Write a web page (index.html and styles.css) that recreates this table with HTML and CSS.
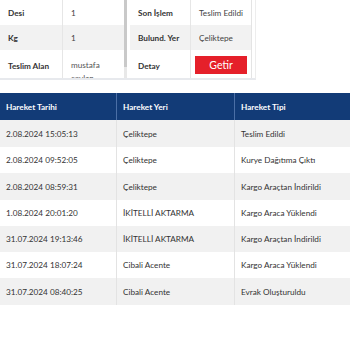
FILE: index.html
```html
<!DOCTYPE html>
<html lang="tr">
<head>
<meta charset="utf-8">
<link rel="stylesheet" href="styles.css">
</head>
<body>
<div class="top">
  <div class="card">
    <div class="info left">
      <div class="row"><div class="lbl">Desi</div><div class="val">1</div></div>
      <div class="row alt"><div class="lbl">Kg</div><div class="val">1</div></div>
      <div class="row tall"><div class="lbl">Teslim Alan</div><div class="val">mustafa ceylan</div></div>
    </div>
    <div class="scroll"><div class="thumb"></div></div>
    <div class="info right">
      <div class="row"><div class="lbl">Son İşlem</div><div class="val">Teslim Edildi</div></div>
      <div class="row alt"><div class="lbl">Bulund. Yer</div><div class="val">Çeliktepe</div></div>
      <div class="row tall"><div class="lbl">Detay</div><div class="val"><span class="btn">Getir</span></div></div>
    </div>
  </div>
</div>
<div class="moves">
  <div class="mrow head"><div>Hareket Tarihi</div><div>Hareket Yeri</div><div>Hareket Tipi</div></div>
  <div class="mrow alt"><div>2.08.2024 15:05:13</div><div>Çeliktepe</div><div>Teslim Edildi</div></div>
  <div class="mrow short"><div>2.08.2024 09:52:05</div><div>Çeliktepe</div><div>Kurye Dağıtıma Çıktı</div></div>
  <div class="mrow alt"><div>2.08.2024 08:59:31</div><div>Çeliktepe</div><div>Kargo Araçtan İndirildi</div></div>
  <div class="mrow short"><div>1.08.2024 20:01:20</div><div>İKİTELLİ AKTARMA</div><div>Kargo Araca Yüklendi</div></div>
  <div class="mrow alt short"><div>31.07.2024 19:13:46</div><div>İKİTELLİ AKTARMA</div><div>Kargo Araçtan İndirildi</div></div>
  <div class="mrow short"><div>31.07.2024 18:07:24</div><div>Cibali Acente</div><div>Kargo Araca Yüklendi</div></div>
  <div class="mrow alt"><div>31.07.2024 08:40:25</div><div>Cibali Acente</div><div>Evrak Oluşturuldu</div></div>
</div>
</body>
</html>
```
FILE: styles.css
```css
html, body {
  margin: 0;
  padding: 0;
  background: #fff;
}
body {
  font-family: Lato, "Open Sans", sans-serif;
  font-size: 8.2px;
  color: #333;
}
.top {
  height: 81px;
  overflow: hidden;
}
.card {
  display: flex;
  width: 255px;
  height: 78px;
  border-right: 1px solid #ededed;
  border-bottom: 2px solid #e7e9ed;
  overflow: hidden;
}
.info {
  display: flex;
  flex-direction: column;
}
.left { width: 124px; }
.right {
  width: 121px;
  margin-left: 3px;
  border-right: 1px solid #e4e4e4;
}
.scroll {
  width: 3px;
  background: #e8e8e8;
}
.thumb {
  height: 67px;
  background: #c9c9c9;
}
.row {
  display: flex;
  height: 25px;
  flex: none;
}
.row.alt { background: #f2f2f2; }
.row.tall { height: 28px; }
.row > div {
  display: flex;
  align-items: center;
  white-space: nowrap;
  box-sizing: border-box;
}
.row .lbl {
  font-weight: bold;
  padding-left: 8px;
  border-right: 1px solid #e6e6e6;
}
.left .lbl { width: 63px; }
.right .lbl { width: 61px; padding-left: 8px; }
.row .val { padding-left: 8px; flex: 1; color: #444; }
.row.tall > div { align-items: flex-start; padding-top: 11px; }
.left .row.tall .val {
  white-space: normal;
  line-height: 13px;
  padding-top: 9px;
  padding-right: 8px;
  color: #555;
}
.right .row.tall .val { padding-top: 6px; padding-left: 4px; }
.btn {
  display: block;
  width: 52px;
  height: 18px;
  line-height: 18px;
  text-align: center;
  background: #e5202a;
  color: #fff;
  font-size: 10.5px;
}
.moves {
  margin-top: 12px;
}
.mrow {
  display: grid;
  grid-template-columns: 117px 118px 115px;
  height: 27px;
}
.mrow.short { height: 26px; }
.mrow > div {
  display: flex;
  align-items: center;
  padding-left: 6px;
  border-right: 1px solid #e3e3e3;
  white-space: nowrap;
  overflow: hidden;
}
.mrow > div:last-child { border-right: none; }
.mrow.alt { background: #f1f1f1; }
.mrow.head {
  background: #123b77;
  color: #fff;
  font-weight: bold;
}
.mrow.head > div { border-right: 1px solid #4b6fa6; }
.mrow.head > div:last-child { border-right: none; }
```
